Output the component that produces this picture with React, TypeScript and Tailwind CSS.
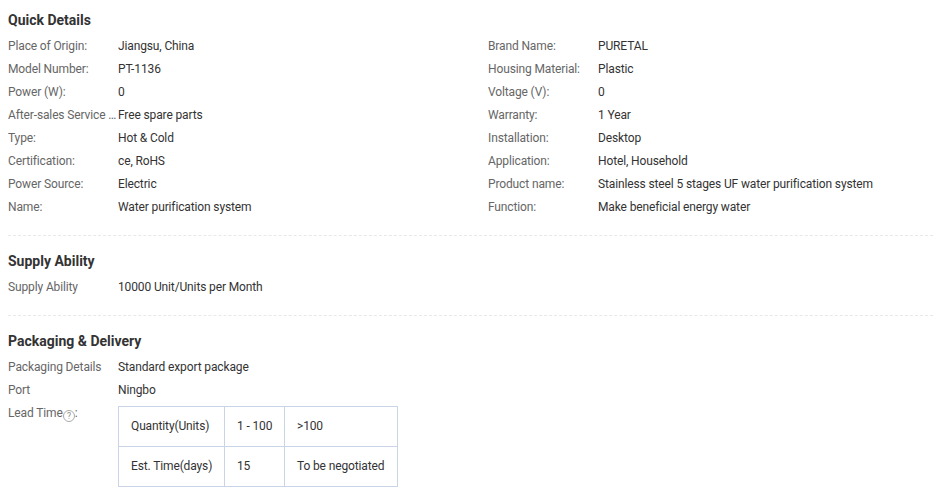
import React from 'react';

const QUICK_DETAILS = [
  ['Place of Origin:', 'Jiangsu, China', 'Brand Name:', 'PURETAL'],
  ['Model Number:', 'PT-1136', 'Housing Material:', 'Plastic'],
  ['Power (W):', '0', 'Voltage (V):', '0'],
  ['After-sales Service Provided:', 'Free spare parts', 'Warranty:', '1 Year'],
  ['Type:', 'Hot & Cold', 'Installation:', 'Desktop'],
  ['Certification:', 'ce, RoHS', 'Application:', 'Hotel, Household'],
  ['Power Source:', 'Electric', 'Product name:', 'Stainless steel 5 stages UF water purification system'],
  ['Name:', 'Water purification system', 'Function:', 'Make beneficial energy water'],
];

function Item({ label, value }: { label: string; value: string }) {
  return (
    <div className="flex h-[23px] items-center leading-[23px]">
      <span className="w-[110px] shrink-0 truncate text-[#666]">{label}</span>
      <span className="text-[#333]">{value}</span>
    </div>
  );
}

function Heading({ children }: { children: React.ReactNode }) {
  return <h3 className="h-[20px] text-[14px] leading-[20px] font-bold tracking-normal text-[#333]">{children}</h3>;
}

function HelpIcon() {
  return (
    <svg width="12" height="12" viewBox="0 0 12 12" className="mt-[4px] shrink-0">
      <circle cx="6" cy="6" r="5.5" fill="none" stroke="#aaa" strokeWidth="1" />
      <text x="6" y="9" textAnchor="middle" fontSize="8.5" fill="#888">?</text>
    </svg>
  );
}

export default function App() {
  return (
    <div className="h-[501px] w-[939px] overflow-hidden bg-white pl-2 pr-[6px] pt-[10px] font-['Roboto',sans-serif] text-[12px] tracking-[-0.13px]">
      <Heading>Quick Details</Heading>
      <div className="mt-[5px] grid grid-cols-[480px_1fr]">
        {QUICK_DETAILS.map((row) => (
          <React.Fragment key={row[0]}>
            <Item label={row[0]} value={row[1]} />
            <Item label={row[2]} value={row[3]} />
          </React.Fragment>
        ))}
      </div>

      <div className="mt-[16px] border-t border-dashed border-[#e8e8e8]" />

      <div className="mt-[15px]">
        <Heading>Supply Ability</Heading>
        <div className="mt-[5px]">
          <Item label="Supply Ability" value="10000 Unit/Units per Month" />
        </div>
      </div>

      <div className="mt-[16px] border-t border-dashed border-[#e8e8e8]" />

      <div className="mt-[15px]">
        <Heading>Packaging &amp; Delivery</Heading>
        <div className="mt-[5px]">
          <Item label="Packaging Details" value="Standard export package" />
          <Item label="Port" value="Ningbo" />
        </div>
        <div className="mt-[4px] flex">
          <div className="flex w-[110px] items-start leading-[15px] text-[#666]">
            Lead Time
            <HelpIcon />:
          </div>
          <table className="border-collapse text-[#333]">
            <tbody>
              <tr className="h-[40px]">
                <td className="w-[106px] border border-[#c9d4e6] pb-[1px] pl-3">Quantity(Units)</td>
                <td className="w-[60px] border border-[#c9d4e6] pb-[1px] pl-3">1 - 100</td>
                <td className="w-[113px] border border-[#c9d4e6] pb-[1px] pl-3">&gt;100</td>
              </tr>
              <tr className="h-[40px]">
                <td className="border border-[#c9d4e6] pb-[1px] pl-3">Est. Time(days)</td>
                <td className="border border-[#c9d4e6] pb-[1px] pl-3">15</td>
                <td className="border border-[#c9d4e6] pb-[1px] pl-3">To be negotiated</td>
              </tr>
            </tbody>
          </table>
        </div>
      </div>
    </div>
  );
}
